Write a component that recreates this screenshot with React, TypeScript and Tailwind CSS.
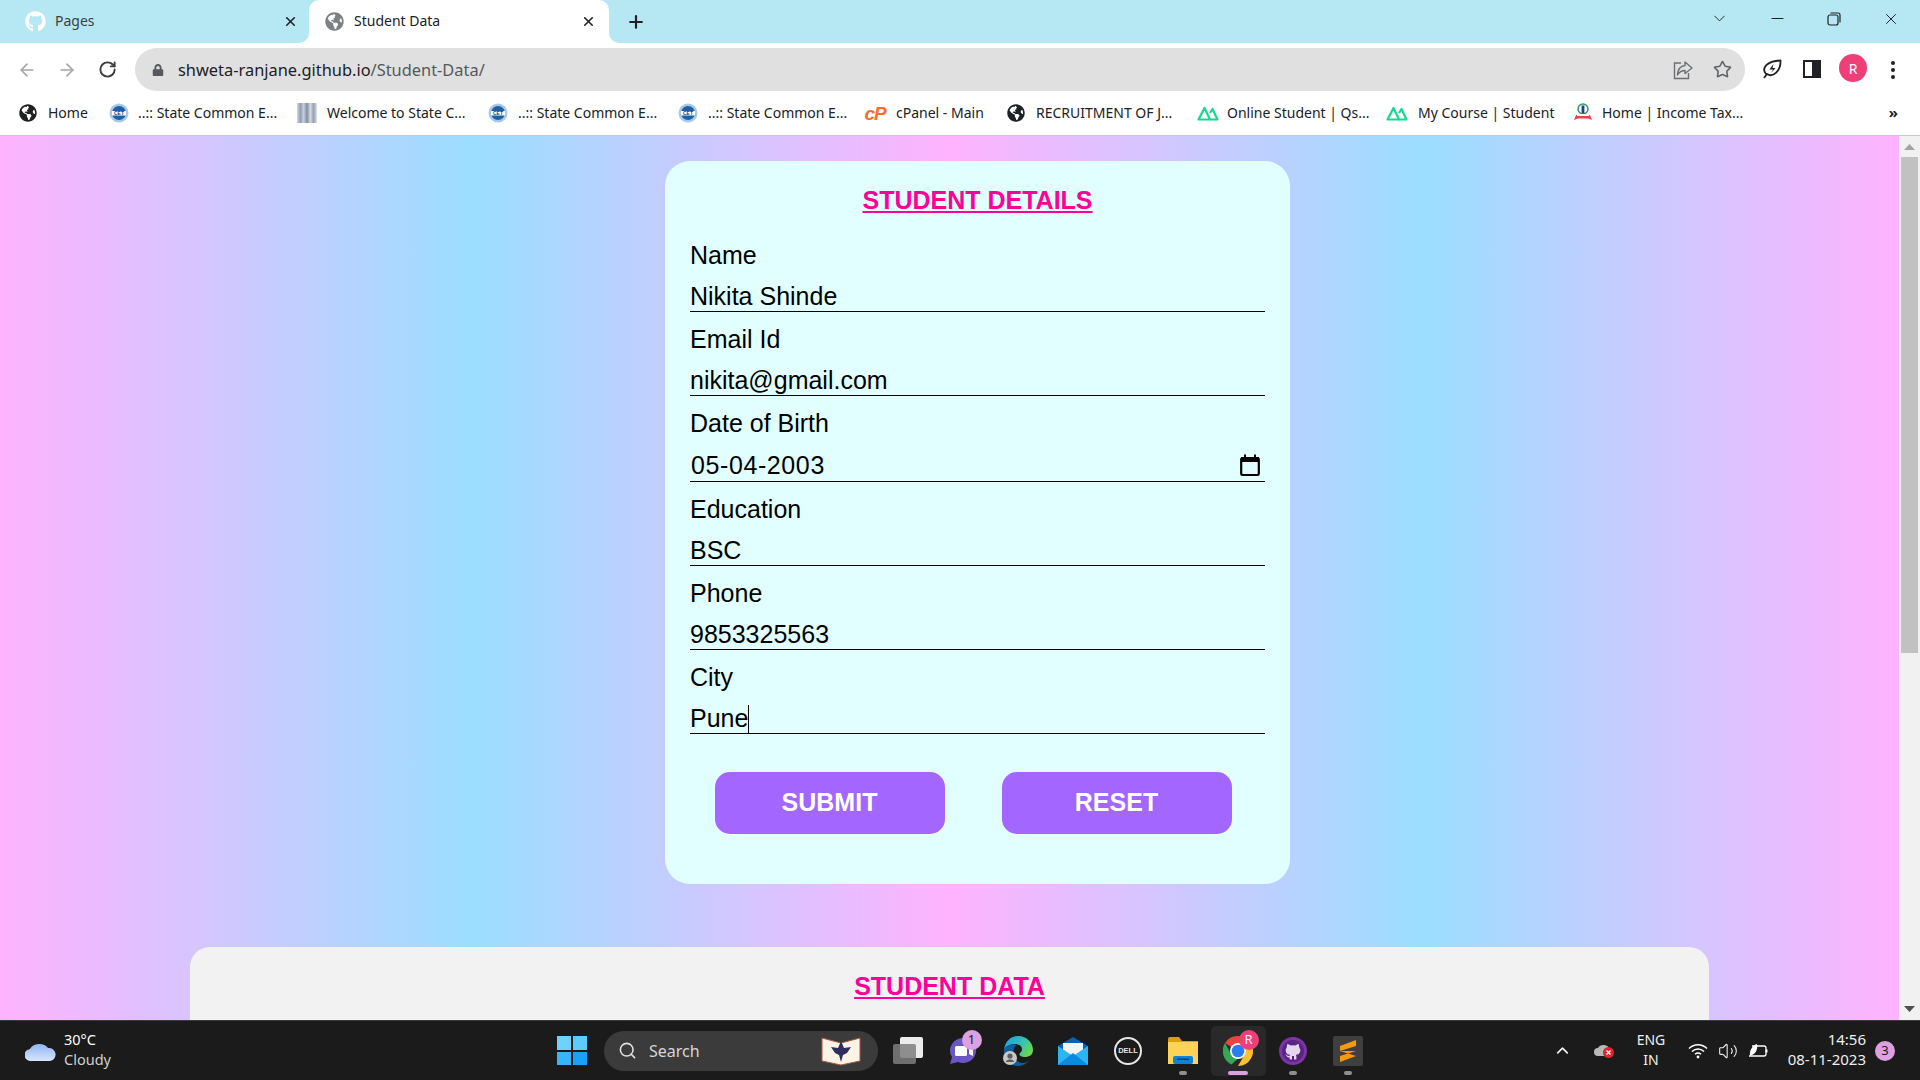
import React from "react";
import { ArrowLeft, ArrowRight, RotateCw, X, Plus, ChevronDown, ChevronUp, Minus, Star, Search, Volume2 } from "lucide-react";
import { FaGithub, FaGlobeAmericas, FaLock } from "react-icons/fa";

const ui = "font-['Noto_Sans','Open_Sans',sans-serif]";
const arial = "font-['Liberation_Sans',Arial,sans-serif]";

function Cet() {
  return (
    <svg width="20" height="20" viewBox="0 0 20 20" className="shrink-0">
      <circle cx="10" cy="10" r="9.5" fill="#a9c8e6" />
      <circle cx="10" cy="10" r="7" fill="#1d5fa8" />
      <rect x="3" y="8" width="14" height="4.5" fill="#fff" />
      <text x="10" y="12" textAnchor="middle" fontSize="5" fontWeight="700" fill="#123f7a" fontFamily="Liberation Sans">CET</text>
    </svg>
  );
}
function Strip() {
  return (
    <div className="w-[20px] h-[20px] shrink-0 bg-[linear-gradient(to_right,#d6dbe4,#8f9cb2,#c9d0da,#7f8da5,#d6dbe4,#93a0b5,#dfe3ea)]" />
  );
}
function Globe() {
  return <FaGlobeAmericas className="shrink-0 text-[#202124] text-[18px]" />;
}
function CP() {
  return <span className={`${arial} shrink-0 w-[22px] text-center font-bold italic text-[19px] leading-none text-[#ff6c2c] tracking-[-1px]`}>cP</span>;
}
function Nuxt() {
  return (
    <svg width="22" height="16" viewBox="0 0 22 16" fill="none" stroke="#14d990" strokeWidth="2.2" strokeLinejoin="round" className="shrink-0">
      <path d="M1.5 14.5 L7.5 3 L13 14.5 Z" />
      <path d="M13 8 L15.5 4 L20.5 14.5 H13" />
    </svg>
  );
}
function Tax() {
  return (
    <svg width="20" height="20" viewBox="0 0 20 20" className="shrink-0">
      <circle cx="10" cy="6" r="5" fill="none" stroke="#2f9c63" strokeWidth="1.5" />
      <rect x="8.6" y="2.5" width="2.8" height="8" fill="#1f3f8c" />
      <path d="M1 17 L3 12 H17 L19 17 L15 15.5 H5 Z" fill="#e0464c" />
      <rect x="4" y="11" width="12" height="2" fill="#fff" />
    </svg>
  );
}

const bookmarks = [
  { icon: <Globe />, label: "Home", w: "w-[41px]", gap: "gap-[10px]" },
  { icon: <Cet />, label: "..:: State Common E...", w: "w-[139px]", gap: "gap-[9px]" },
  { icon: <Strip />, label: "Welcome to State C...", w: "w-[141px]", gap: "gap-[10px]" },
  { icon: <Cet />, label: "..:: State Common E...", w: "w-[140px]", gap: "gap-[10px]" },
  { icon: <Cet />, label: "..:: State Common E...", w: "w-[137px]", gap: "gap-[10px]" },
  { icon: <CP />, label: "cPanel - Main", w: "w-[90px]", gap: "gap-[11px]" },
  { icon: <Globe />, label: "RECRUITMENT OF J...", w: "w-[142px]", gap: "gap-[10px]" },
  { icon: <Nuxt />, label: "Online Student | Qs...", w: "w-[140px]", gap: "gap-[9px]" },
  { icon: <Nuxt />, label: "My Course | Student", w: "w-[135px]", gap: "gap-[11px]" },
  { icon: <Tax />, label: "Home | Income Tax...", w: "w-[140px]", gap: "gap-[9px]" },
];

function Flare({ side }: { side: "l" | "r" }) {
  return (
    <svg width="10" height="10" viewBox="0 0 10 10" className={side === "l" ? "absolute bottom-0 left-[-10px]" : "absolute bottom-0 right-[-10px]"}>
      <path d={side === "l" ? "M10 0 V10 H0 A10 10 0 0 0 10 0 Z" : "M0 0 V10 H10 A10 10 0 0 1 0 0 Z"} fill="#fff" />
    </svg>
  );
}

function TabBar() {
  return (
    <div className={`${ui} h-[43px] bg-[#b6e8f4] flex items-center shrink-0 text-[14px] text-[#3c4043]`}>
      <div className="w-[309px] h-full flex items-center pl-[25px]">
        <FaGithub className="text-white text-[21px] shrink-0" />
        <span className="ml-[9px] mb-[2px]">Pages</span>
        <X className="ml-auto mr-[11px] text-[#202124]" size={15} strokeWidth={2.6} />
      </div>
      <div className="relative w-[300px] h-full bg-white rounded-t-[10px] flex items-center pl-[16px]">
        <Flare side="l" />
        <Flare side="r" />
        <FaGlobeAmericas className="text-[#7d8185] text-[19px] shrink-0" />
        <span className="ml-[10px] mb-[2px] text-[#202124]">Student Data</span>
        <X className="ml-auto mr-[13px] text-[#202124]" size={15} strokeWidth={2.6} />
      </div>
      <Plus className="ml-[17px] text-[#202124]" size={20} strokeWidth={2.6} />
      <div className="ml-auto flex items-center h-full pb-[6px] text-[#202124]">
        <ChevronDown size={19} strokeWidth={1.2} />
        <Minus className="ml-[39px]" size={19} strokeWidth={1.3} />
        <svg className="ml-[40px]" width="14" height="14" viewBox="0 0 14 14" fill="none" stroke="#202124" strokeWidth="1.2">
          <rect x="1" y="3" width="10" height="10" rx="2" />
          <path d="M3.5 1 H11 A2 2 0 0 1 13 3 V10.5" />
        </svg>
        <X className="ml-[41px] mr-[20px]" size={18} strokeWidth={1.3} />
      </div>
    </div>
  );
}

function Toolbar() {
  return (
    <div className="h-[48px] bg-white flex items-start shrink-0 pt-[5px]">
      <ArrowLeft className="ml-[17px] mt-[12px] text-[#a3a5a8]" size={20} strokeWidth={2} />
      <ArrowRight className="ml-[20px] mt-[12px] text-[#a3a5a8]" size={20} strokeWidth={2} />
      <RotateCw className="ml-[21px] mt-[12px] text-[#3b3d40]" size={19} strokeWidth={2.4} />
      <div className={`${ui} ml-[18px] w-[1610px] h-[43px] rounded-full bg-[#e0e0e0] flex items-center pl-[17px] text-[16.4px]`}>
        <FaLock className="text-[#55585c] text-[12px] shrink-0" />
        <span className="ml-[14px] mt-[1px] text-[#202124]">shweta-ranjane.github.io</span>
        <span className="mt-[1px] text-[#55585c]">/Student-Data/</span>
        <svg className="ml-auto" width="20" height="20" viewBox="0 0 20 20" fill="none" stroke="#6b6e72" strokeWidth="1.4">
          <path d="M8 3 H1.5 V18.5 H15.5 V13" />
          <path d="M12 2 L19 8 L12 13.5 V10.5 C8 10.5 6 12.5 4.5 15 C4.8 10 7.5 6 12 5.5 Z" strokeLinejoin="round" />
        </svg>
        <Star className="ml-[20px] mr-[13px] text-[#5f6368]" size={19} strokeWidth={2} />
      </div>
      <svg className="ml-[17px] mt-[11px]" width="20" height="20" viewBox="0 0 20 20" fill="none" stroke="#202124" strokeWidth="1.8">
        <path d="M4 15 C-1 9 5 2 18.5 1.5 C19 12 11 19 5 15 L2 19" strokeLinejoin="round" />
        <path d="M11.5 5 L7.5 10.5 H11 L9 14 L13.5 9 H10.5 Z" fill="#202124" stroke="none" />
      </svg>
      <div className="ml-[21px] mt-[12px] w-[18px] h-[18px] border-2 border-[#202124] flex justify-end">
        <div className="w-[7px] h-full bg-[#202124]" />
      </div>
      <div className={`${ui} ml-[18px] mt-[6px] w-[28px] h-[28px] rounded-full bg-[#ef3f78] text-white text-[14px] flex items-center justify-center`}>R</div>
      <div className="ml-[24px] mt-[13px] flex flex-col gap-[3px]">
        <span className="w-[4px] h-[4px] rounded-full bg-[#202124]" />
        <span className="w-[4px] h-[4px] rounded-full bg-[#202124]" />
        <span className="w-[4px] h-[4px] rounded-full bg-[#202124]" />
      </div>
    </div>
  );
}

function BookmarkBar() {
  return (
    <div className={`${ui} h-[45px] bg-white border-b border-[#c8c8c8] flex items-center shrink-0 pl-[18px] text-[14px] text-[#202124]`}>
      <div className="flex items-center gap-[20px]">
        {bookmarks.map((b, i) => (
          <div key={i} className={`flex items-center ${b.gap}`}>
            <span className="w-[20px] flex justify-center">{b.icon}</span>
            <span className={`${b.w} mb-[2px] whitespace-nowrap`}>{b.label}</span>
          </div>
        ))}
      </div>
      <span className="ml-auto mr-[22px] mb-[2px] font-bold text-[15px] text-[#202124] leading-none">»</span>
    </div>
  );
}

function Field({ label, value, date, caret, last }: { label: string; value: string; date?: boolean; caret?: boolean; last?: boolean }) {
  return (
    <div className={last ? "" : "mb-[5px]"}>
      <div className="h-[42px] pt-[3px] flex items-center text-[25px] text-black">{label}</div>
      <div className={`${date ? "h-[39px] pl-[1px] tracking-[0.6px]" : "h-[37px]"} pt-[7px] border-b-[1.5px] border-black flex items-center text-[25px] text-black leading-none`}>
        <span>{value}</span>
        {caret && <span className="w-px h-[28px] bg-black" />}
        {date && (
          <svg className="ml-auto mr-[5px] mb-[2px]" width="20" height="22" viewBox="0 0 20 22" fill="none">
            <rect x="1.2" y="4" width="17.6" height="17" rx="1.5" stroke="#000" strokeWidth="2.2" />
            <rect x="1" y="3" width="18" height="5" fill="#000" />
            <rect x="4" y="0.5" width="2" height="3" fill="#000" />
            <rect x="14" y="0.5" width="2" height="3" fill="#000" />
          </svg>
        )}
      </div>
    </div>
  );
}

function Page() {
  return (
    <div className="flex-1 min-h-0 flex">
      <div className={`${arial} flex-1 min-w-0 overflow-hidden pt-[25px] bg-[linear-gradient(to_right,#ffb3ff_0%,#9bdeff_25%,#ffb3ff_50%,#9bdeff_75%,#ffb3ff_100%)]`}>
        <div className="ml-[665px] w-[625px] h-[723px] rounded-[25px] bg-[#e2ffff] px-[25px] pt-[22px]">
          <h1 className="text-center text-[25px] leading-[34px] font-bold underline text-[#ff0099] mb-[16px]">STUDENT DETAILS</h1>
          <Field label="Name" value="Nikita Shinde" />
          <Field label="Email Id" value="nikita@gmail.com" />
          <Field label="Date of Birth" value="05-04-2003" date />
          <Field label="Education" value="BSC" />
          <Field label="Phone" value="9853325563" />
          <Field label="City" value="Pune" caret last />
          <div className="flex justify-center gap-[57px] mt-[38px] pr-[9px]">
            <button className="w-[230px] h-[62px] rounded-[15px] bg-[#a366ff] text-white font-bold text-[25px]">SUBMIT</button>
            <button className="w-[230px] h-[62px] rounded-[15px] bg-[#a366ff] text-white font-bold text-[25px]">RESET</button>
          </div>
        </div>
        <div className="ml-[190px] w-[1519px] h-[200px] mt-[63px] rounded-t-[20px] bg-[#f2f2f2] pt-[22px]">
          <h2 className="text-center text-[25px] leading-[34px] font-bold underline text-[#ff0099]">STUDENT DATA</h2>
        </div>
      </div>
      <div className="w-[21px] shrink-0 bg-[#f1f1f1] flex flex-col items-center">
        <svg className="mt-[8px]" width="11" height="6" viewBox="0 0 11 6"><path d="M5.5 0 L11 6 H0 Z" fill="#a3a3a3" /></svg>
        <div className="mt-[7px] w-[17px] h-[496px] bg-[#c1c1c1]" />
        <svg className="mt-auto mb-[8px]" width="11" height="6" viewBox="0 0 11 6"><path d="M5.5 6 L11 0 H0 Z" fill="#505050" /></svg>
      </div>
    </div>
  );
}

function Slot({ children, active, dot }: { children: React.ReactNode; active?: boolean; dot?: boolean }) {
  return (
    <div className={`relative w-[55px] h-[50px] flex items-center justify-center rounded-[5px] ${active ? "bg-[#292929]" : ""}`}>
      {children}
      {dot && <span className="absolute bottom-[1px] left-[23.5px] w-[8px] h-[4px] rounded-full bg-[#8f8f8f]" />}
      {active && <span className="absolute bottom-[1px] left-[17.5px] w-[20px] h-[4px] rounded-full bg-[#dda0e0]" />}
    </div>
  );
}

function Badge({ children, cls }: { children: React.ReactNode; cls: string }) {
  return <span className={`absolute flex items-center justify-center w-[20px] h-[20px] rounded-full text-[13px] ${cls}`}>{children}</span>;
}

function Taskbar() {
  return (
    <div className={`${ui} h-[60px] bg-[#1b1b1b] border-t border-[#3a3a3a] shrink-0 flex items-center`}>
      <div className="w-[557px] shrink-0 flex items-center pl-[25px]">
        <svg width="31" height="20" viewBox="0 0 31 20">
          <defs>
            <linearGradient id="cl" x1="0" y1="0" x2="0" y2="1">
              <stop offset="0" stopColor="#8fb6f0" />
              <stop offset="1" stopColor="#d7e5fb" />
            </linearGradient>
          </defs>
          <path d="M6 20 A6 6 0 0 1 5 8 A10 8 0 0 1 23 7 A6.5 6.5 0 0 1 25 20 Z" fill="url(#cl)" />
        </svg>
        <div className="ml-[8px] mb-[4px] text-[14.5px] leading-[20px]">
          <div className="text-white">30°C</div>
          <div className="text-[#cfcfcf]">Cloudy</div>
        </div>
      </div>
      <div className="grid grid-cols-2 gap-[2px] w-[30px] h-[29px] shrink-0">
        <span className="bg-[#6fd2fd]" />
        <span className="bg-[#5ccbfd]" />
        <span className="bg-[#37b5fb]" />
        <span className="bg-[#1aa2f8]" />
      </div>
      <div className="ml-[17px] w-[274px] h-[40px] rounded-full bg-[#3b3b3b] flex items-center pl-[14px] shrink-0 text-[16px] text-[#d6d6d6]">
        <Search size={19} strokeWidth={2} className="text-[#e0e0e0]" />
        <span className="ml-[12px]">Search</span>
        <svg className="ml-auto mr-[17px]" width="40" height="31" viewBox="0 0 40 31">
          <path d="M1 3 L20 8 L39 3 V26 L20 30 L1 26 Z" fill="#fbf3e6" stroke="#a8583f" strokeWidth="1" />
          <path d="M20 6 L23 13 L30 12 L26 18 L22 20 L20 27 L18 20 L14 18 L10 12 L17 13 Z" fill="#2e2d5e" />
        </svg>
      </div>
      <div className="ml-[2.5px] flex items-center shrink-0">
        <Slot>
          <div className="relative w-[30px] h-[27px]">
            <div className="absolute right-0 top-0 w-[23px] h-[21px] rounded-[2px] bg-[#ececec]" />
            <div className="absolute left-0 bottom-0 w-[23px] h-[20px] rounded-[2px] bg-[#7e7e7e]/85" />
          </div>
        </Slot>
        <Slot>
          <svg width="29" height="28" viewBox="0 0 29 28">
            <path d="M14 1 A13 12.5 0 1 1 9 25 L1 27 L3 20 A13 12.5 0 0 1 14 1 Z" fill="#6b57c4" />
            <rect x="6" y="9" width="12" height="10" rx="1.5" fill="#fff" />
            <path d="M20 11 L24 9 V19 L20 17 Z" fill="#fff" />
          </svg>
          <Badge cls="top-[4px] right-[9px] bg-[#dda0e0] text-[#1b1b1b]">1</Badge>
        </Slot>
        <Slot>
          <svg width="30" height="30" viewBox="0 0 30 30">
            <defs>
              <linearGradient id="ed" x1="0" y1="0" x2="1" y2="0.6">
                <stop offset="0" stopColor="#1b9de2" />
                <stop offset="0.6" stopColor="#35c1b5" />
                <stop offset="1" stopColor="#6ad64f" />
              </linearGradient>
            </defs>
            <path d="M1 14 C2 5 8 0 15 0 C24 0 30 7 30 14 C30 19 26 21 22 21 C18 21 15 19 17 17 C20 15 20 10 15 8.5 C9 7 3 10 1 14 Z" fill="url(#ed)" />
            <path d="M1 14 C3 9 9 7 14 9 C9 11 9 21 14 25 C18 28 24 28 27 23 C24 28 19 30 15 30 C7 30 0 23 1 14 Z" fill="#0f5e9e" />
            <circle cx="7" cy="22" r="7" fill="#c8c8c8" />
            <circle cx="7" cy="20" r="2.6" fill="#5c5c5c" />
            <path d="M2.5 26 A5 5 0 0 1 11.5 26 Z" fill="#5c5c5c" />
          </svg>
        </Slot>
        <Slot>
          <svg width="30" height="28" viewBox="0 0 30 28">
            <path d="M15 0 L30 9 V12 H0 V9 Z" fill="#0b62b4" />
            <path d="M5 6 H25 V14 L15 20 L5 14 Z" fill="#f4f4f4" />
            <path d="M0 9 L15 19 L30 9 V28 H0 Z" fill="#2cb5f0" />
            <path d="M0 28 L15 16 L30 28 Z" fill="#0d8ade" />
          </svg>
        </Slot>
        <Slot>
          <div className="w-[28px] h-[28px] rounded-full border-2 border-[#e6e6e6] flex items-center justify-center">
            <span className={`${arial} font-bold text-[7.5px] text-[#e6e6e6]`}>DELL</span>
          </div>
        </Slot>
        <Slot dot>
          <svg width="30" height="27" viewBox="0 0 30 27">
            <path d="M0 2 A2 2 0 0 1 2 0 H11 L14 4 H30 V9 H0 Z" fill="#d9a00c" />
            <path d="M0 5 H30 V27 H0 Z" fill="#fbd455" />
            <rect x="5" y="19" width="20" height="8" rx="2" fill="#0a84d6" />
            <rect x="9" y="21.5" width="12" height="1.5" fill="#043f79" />
          </svg>
        </Slot>
        <Slot active>
          <svg width="30" height="30" viewBox="0 0 30 30">
            <path d="M15 0 A15 15 0 0 1 28 7.5 H15 A7.5 7.5 0 0 0 8.5 11.3 L2 7 A15 15 0 0 1 15 0 Z" fill="#e8453c" />
            <path d="M2 7 L8.5 18.8 A7.5 7.5 0 0 0 15 22.5 L8.5 28.5 A15 15 0 0 1 2 7 Z" fill="#34a853" />
            <path d="M28 7.5 A15 15 0 0 1 15 30 L21.5 18.8 A7.5 7.5 0 0 0 21.5 11.3 Z" fill="#fbc02d" />
            <circle cx="15" cy="15" r="8" fill="#fff" />
            <circle cx="15" cy="15" r="6.3" fill="#2a7df0" />
          </svg>
          <Badge cls="top-[4px] right-[7px] bg-[#ef3f78] text-white/90">R</Badge>
        </Slot>
        <Slot dot>
          <div className="w-[28px] h-[28px] rounded-full bg-[#5a2482] border-[3px] border-[#7c34a8] flex items-center justify-center">
            <svg width="18" height="18" viewBox="0 0 16 16">
              <path d="M3 1.5 L6 3 Q8 2.6 10 3 L13 1.5 L13.6 4.8 Q15 6.5 14.2 9 Q13.4 11.2 10.6 11.4 Q11 12 11 13 V15.5 H8.9 V12.5 H7.1 V15.5 H5 V13.6 Q2.8 14 2 12 L1 11 Q2.5 11 3.2 12.2 L5 12.4 Q5 11.8 5.4 11.4 Q2.6 11.2 1.8 9 Q1 6.5 2.4 4.8 Z" fill="#e6d5ee" />
            </svg>
          </div>
        </Slot>
        <Slot dot>
          <div className="w-[30px] h-[30px] rounded-[2px] bg-[#3f3f3f] flex items-center justify-center">
            <svg width="16" height="22" viewBox="0 0 16 22"><path d="M16 0 V6 L0 11 V6 Z M0 11 L16 16 V11 Z M16 11 V16 L0 22 V16 Z" fill="#f59a0c" /></svg>
          </div>
        </Slot>
      </div>
      <div className="ml-auto flex items-center shrink-0 text-[#efefef]">
        <ChevronUp size={19} strokeWidth={2.2} />
        <svg className="ml-[22px]" width="20" height="15" viewBox="0 0 20 15">
          <path d="M4 13 A4 4 0 0 1 4 5 A6 5 0 0 1 15 5 L15 13 Z" fill="#b9b9b9" />
          <circle cx="14.5" cy="9.5" r="5.5" fill="#e0222e" />
          <path d="M12.5 7.5 L16.5 11.5 M16.5 7.5 L12.5 11.5" stroke="#fff" strokeWidth="1.4" />
        </svg>
        <div className="ml-[19px] mb-[2px] w-[36px] text-center text-[14px] leading-[20px]">
          <div>ENG</div>
          <div>IN</div>
        </div>
        <svg className="ml-[19px]" width="20" height="16" viewBox="0 0 20 16" fill="none" stroke="#fff" strokeWidth="1.5">
          <path d="M1 5.5 C6 0.5 14 0.5 19 5.5" />
          <path d="M4 8.5 C7.5 5 12.5 5 16 8.5" />
          <path d="M7 11.3 C9 9.6 11 9.6 13 11.3" />
          <circle cx="10" cy="14" r="1.4" fill="#fff" stroke="none" />
        </svg>
        <Volume2 className="ml-[10px]" size={20} strokeWidth={1.3} />
        <svg className="ml-[10px]" width="20" height="16" viewBox="0 0 20 16" fill="none" stroke="#fff" strokeWidth="1.3">
          <path d="M4 3 H16 A2 2 0 0 1 18 5 V11 A2 2 0 0 1 16 13 H1" />
          <path d="M18.5 6.5 V9.5" strokeWidth="2" />
          <path d="M2 13 C1 7 5 2 9 1 C10 6 8 11 2 13 Z" fill="#fff" stroke="none" />
        </svg>
        <div className="ml-[18px] mb-[4px] w-[80px] text-right text-[15px] leading-[20px] whitespace-nowrap">
          <div>14:56</div>
          <div>08-11-2023</div>
        </div>
        <span className="ml-[9px] mr-[25px] w-[20px] h-[20px] rounded-full bg-[#dda0e0] text-[#1b1b1b] text-[13px] flex items-center justify-center">3</span>
      </div>
    </div>
  );
}

export default function App() {
  return (
    <div className="w-[1920px] h-[1080px] overflow-hidden flex flex-col bg-white">
      <TabBar />
      <Toolbar />
      <BookmarkBar />
      <Page />
      <Taskbar />
    </div>
  );
}
